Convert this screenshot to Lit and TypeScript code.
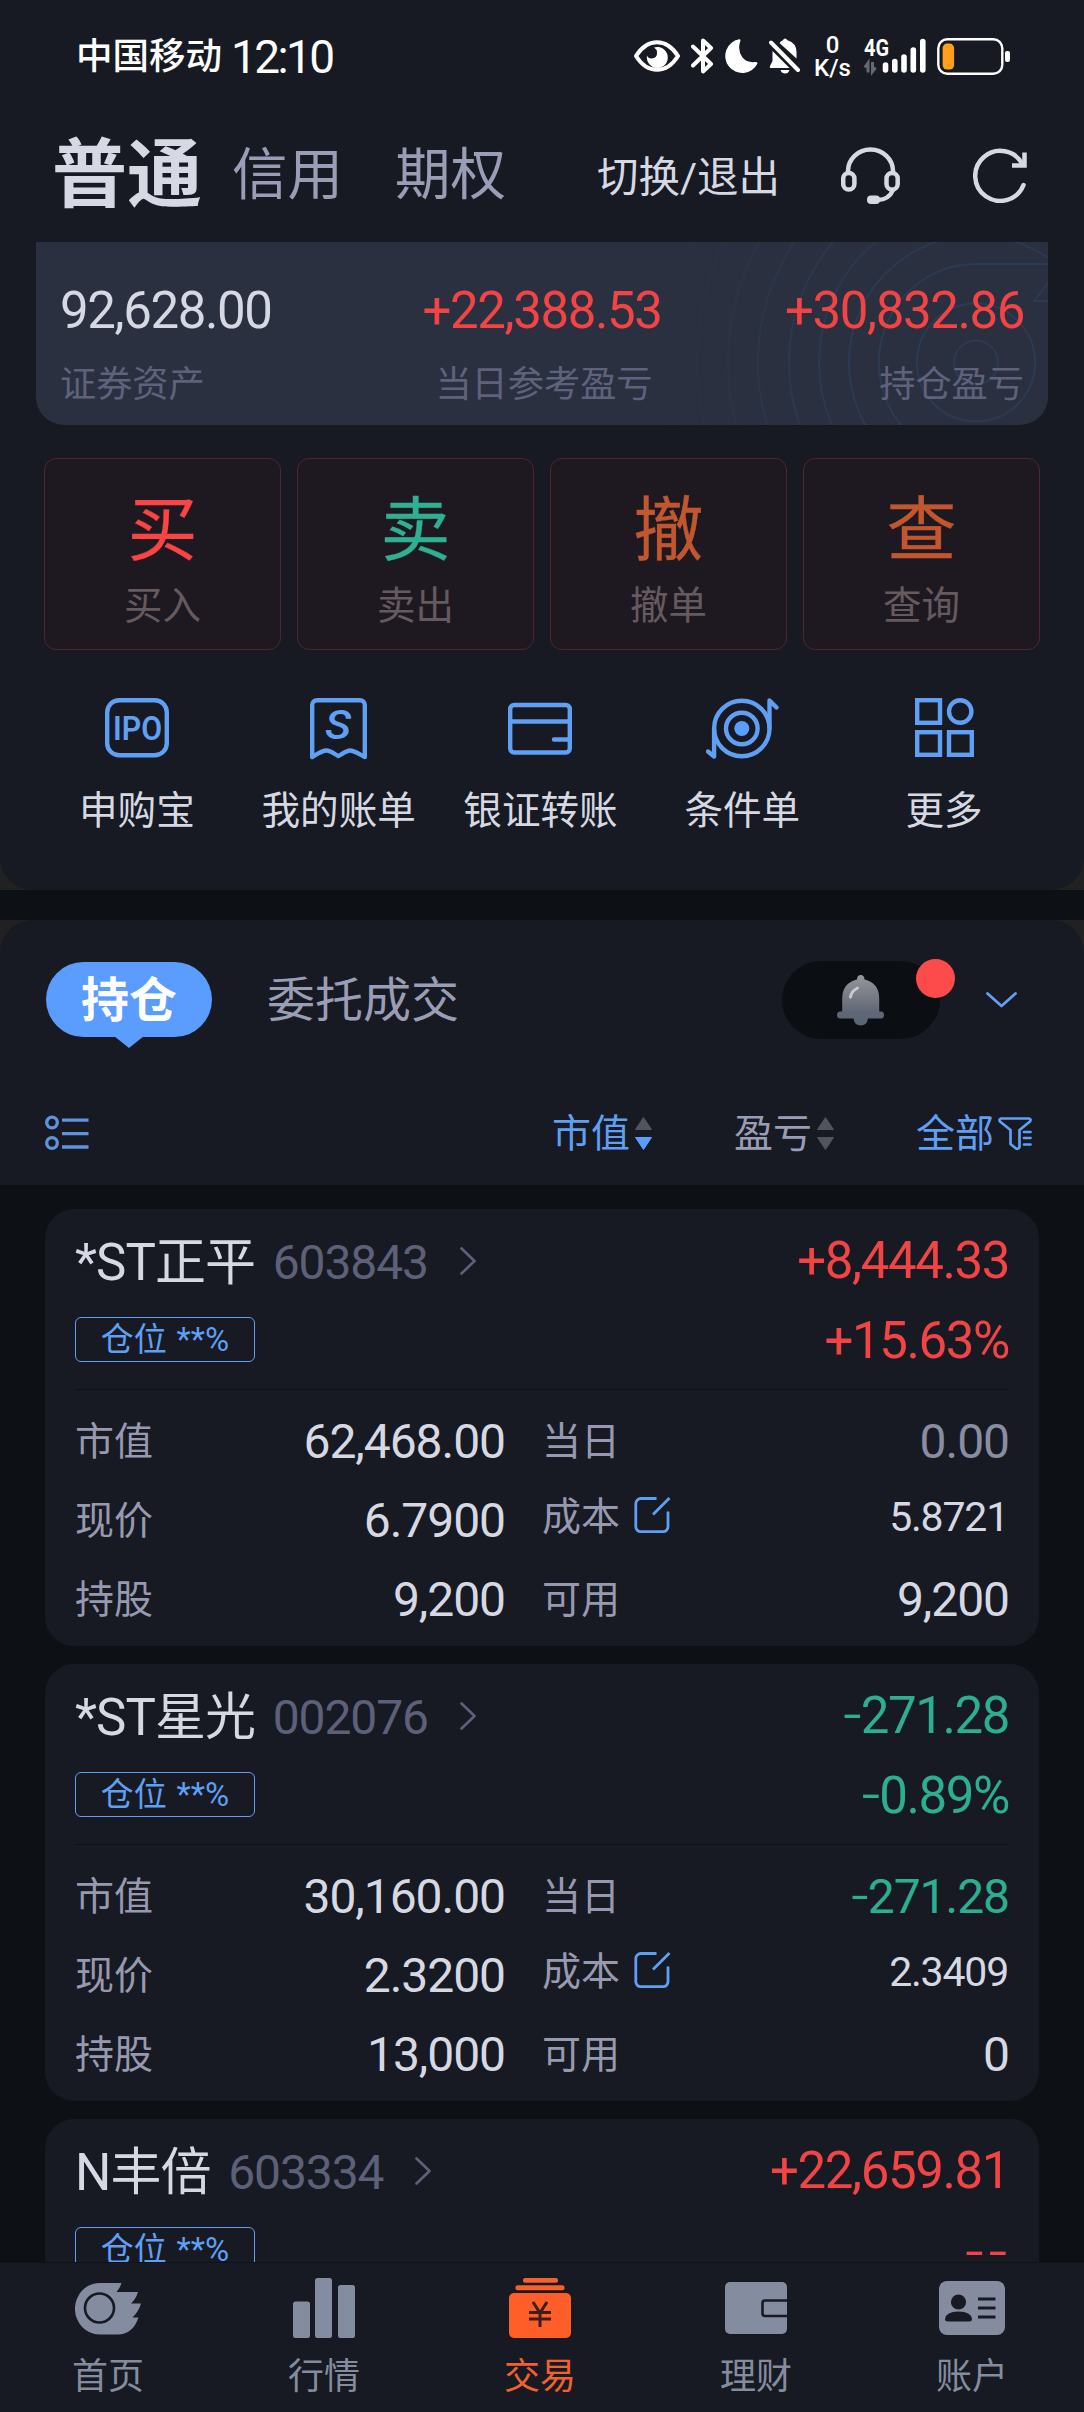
import { LitElement, html, css, svg, nothing } from "lit";
import { customElement, property } from "lit/decorators.js";

type Tone = "up" | "down" | "flat" | "plain";

interface Holding {
  name: string;
  code: string;
  profit: string;
  rate: string;
  tone: Tone;
  value: string;
  today: string;
  todayTone: Tone;
  price: string;
  cost: string;
  shares: string;
  usable: string;
}

const holdings: Holding[] = [
  { name: "*ST正平", code: "603843", profit: "+8,444.33", rate: "+15.63%", tone: "up", value: "62,468.00", today: "0.00", todayTone: "flat", price: "6.7900", cost: "5.8721", shares: "9,200", usable: "9,200" },
  { name: "*ST星光", code: "002076", profit: "-271.28", rate: "-0.89%", tone: "down", value: "30,160.00", today: "-271.28", todayTone: "down", price: "2.3200", cost: "2.3409", shares: "13,000", usable: "0" },
  { name: "N丰倍", code: "603334", profit: "+22,659.81", rate: "--", tone: "up", value: "", today: "", todayTone: "plain", price: "", cost: "", shares: "", usable: "" },
];

const eyeIcon = html`<svg width="46" height="32" viewBox="0 0 46 32"><path d="M2 16C7 8 14 2.200 23 2.200S39 8 44 16C39 24 32 29.800 23 29.800S7 24 2 16Z" fill="none" stroke="#fff" stroke-width="4" stroke-linejoin="round"/><path d="M20 7.500A10.500 10.500 0 1 1 13 15.500Q14 18.500 17.500 18.500Q23.500 18 23 12.500Q22.800 9 20 7.500Z" fill="#fff"/></svg>`;
const bluetoothIcon = html`<svg width="23" height="36" viewBox="0 0 23 36"><path d="M2 8.500L20 26L12 33.500V2.500L20 10L2 27.500" fill="none" stroke="#fff" stroke-width="4" stroke-linejoin="round" stroke-linecap="round"/></svg>`;
const moonIcon = html`<svg width="33" height="34" viewBox="0 0 33 34"><path d="M15.500 1.500Q15.500 .2 14 .3A17 17 0 1 0 32.500 24.500Q32.500 22.500 30.500 23Q22 24 17.500 18.500Q12 11 15.500 1.500Z" fill="#fff"/></svg>`;
const muteIcon = html`<svg width="31" height="36" viewBox="0 0 31 36"><path d="M3.500 13L20.500 30H2.500Q0 30 1 28L3.500 23ZM10.500 5Q12 2.800 14 2.200Q14.500 .5 16 .5T18.500 2.200Q27.500 5 27.500 14V20.500Z" fill="#fff"/><path d="M2 4.500L29 32" stroke="#fff" stroke-width="4" stroke-linecap="round"/><path d="M11.500 32H20.500Q19.500 35.500 16 35.500T11.500 32Z" fill="#fff"/></svg>`;
const signalIcon = html`<svg class="signal" width="62" height="36" viewBox="0 0 62 36"><text class="net" x="0" y="18" textLength="25" lengthAdjust="spacingAndGlyphs">4G</text><path d="M4 34.500V25L.8 29.500M8.500 24V33.500L11.500 29.500" fill="none" stroke="#656872" stroke-width="3"/><path d="M21.500 27V32M30.800 23.500V32M40 19V32M49.300 12V32M58.800 3.500V32" stroke="#fff" stroke-width="5.600" stroke-linecap="round"/></svg>`;
const batteryIcon = html`<svg width="73" height="37" viewBox="0 0 73 37"><rect x="1.300" y="1.300" width="64" height="34.400" rx="9" fill="none" stroke="#fff" stroke-width="2.400"/><rect x="5.600" y="5.600" width="11.500" height="26" rx="4.500" fill="#ff9f1c"/><rect x="68" y="13" width="5" height="11" rx="2" fill="#fff"/></svg>`;
const headsetIcon = html`<svg width="59" height="57" viewBox="0 0 59 57" fill="none" stroke="#d6d9e3" stroke-width="4.500"><path d="M7 25V24A22.500 21.500 0 0 1 52 24V25"/><rect x="2.200" y="26" width="11.200" height="16.500" rx="5.600"/><rect x="45.500" y="26" width="11.200" height="16.500" rx="5.600"/><path d="M52 43Q48 52.500 37 53"/><rect x="26" y="48.500" width="13" height="8.500" rx="4" fill="#d6d9e3" stroke="none"/></svg>`;
const refreshIcon = html`<svg width="54" height="55" viewBox="0 0 54 55" fill="none" stroke="#d6d9e3" stroke-width="4.500"><path d="M49.500 16.500A25 25 0 1 0 50.500 37" stroke-linecap="round"/><path d="M51.500 4.500V17.500H39" /></svg>`;

const ipoIcon = html`<svg width="64" height="62" viewBox="0 0 64 62"><rect x="2.200" y="2.200" width="59.600" height="55" rx="12" fill="none" stroke="#5f9ff4" stroke-width="4.400"/><text class="ipo" x="8" y="42" textLength="49" lengthAdjust="spacingAndGlyphs">IPO</text></svg>`;
const billIcon = html`<svg width="57" height="62" viewBox="0 0 57 62"><path d="M2.200 59V7A4.800 4.800 0 0 1 7 2.200H50A4.800 4.800 0 0 1 54.800 7V59C48 55.500 44 52.500 40 52.500C36 52.500 32 56.500 28.300 58C25 56.500 21 52.500 16.500 52.500C12 52.500 8 55.500 2.200 59Z" fill="none" stroke="#5f9ff4" stroke-width="4.400" stroke-linejoin="round"/><text class="bill" x="15" y="41" textLength="26" lengthAdjust="spacingAndGlyphs">S</text></svg>`;
const cardIcon = html`<svg width="64" height="62" viewBox="0 0 64 62" fill="none" stroke="#5f9ff4" stroke-width="4.400" stroke-linecap="round"><rect x="2.200" y="7" width="59.600" height="47.500" rx="4"/><path d="M3 23.500H61M46 41.500H61"/></svg>`;
const targetIcon = html`<svg width="73" height="62" viewBox="0 0 73 62" fill="none" stroke="#5f9ff4" stroke-width="4.400" stroke-linecap="round" stroke-linejoin="round"><circle cx="35.800" cy="30.500" r="27.700"/><circle cx="35.800" cy="30.500" r="15.800"/><circle cx="35.800" cy="30.500" r="7.500" fill="#5a9cff" stroke="none"/><path d="M8.100 31V58.500L2 53.500M63.500 30V2.500L70.500 9.500"/></svg>`;
const moreIcon = html`<svg width="59" height="62" viewBox="0 0 59 62" fill="none" stroke="#5f9ff4" stroke-width="4.400"><rect x="2.200" y="2.200" width="22.800" height="22.600"/><ellipse cx="45.200" cy="13.500" rx="11.200" ry="11.300"/><rect x="2.200" y="34.200" width="22.800" height="22.600"/><rect x="34" y="34.200" width="22.800" height="22.600"/></svg>`;

const bellIcon = html`<svg width="47" height="51" viewBox="0 0 47 51"><defs><linearGradient id="bell" x1="0" y1="0" x2="0" y2="1"><stop offset="0" stop-color="#96979b"/><stop offset=".75" stop-color="#606675"/><stop offset="1" stop-color="#596571"/></linearGradient></defs><path d="M20 4.500Q20 0 23.700 0T27.500 4.500Q42 8 42.200 23V36.500H44Q47 36.500 47 40T44 43.500H31Q30 50.500 23.700 50.500T16.500 43.500H3.500Q0 43.500 0 40T3.500 36.500H5.200V23Q5.500 8 20 4.500Z" fill="url(#bell)"/><path d="M13.500 22Q14.500 16 20.500 13" fill="none" stroke="#c9cace" stroke-width="3" stroke-linecap="round"/></svg>`;
const chevronDown = html`<svg width="31" height="16" viewBox="0 0 31 16"><path d="M1.500 1.500L15.500 14L29.500 1.500" fill="none" stroke="#5f9ff4" stroke-width="2.800" stroke-linecap="round" stroke-linejoin="round"/></svg>`;
const chevronRight = html`<svg width="17" height="28" viewBox="0 0 17 28"><path d="M1.500 1.500L14.500 14L1.500 26.500" fill="none" stroke="#5d6079" stroke-width="2.600" stroke-linecap="round" stroke-linejoin="round"/></svg>`;
const listIcon = html`<svg width="44" height="38" viewBox="0 0 44 38" fill="none" stroke="#5f93de" stroke-width="3.300"><circle cx="7" cy="7.500" r="5.300"/><circle cx="7" cy="28" r="5.300"/><path d="M17 5.200H43.500M17 18.600H43.500M17 32H43.500"/></svg>`;
const funnelIcon = html`<svg width="34" height="34" viewBox="0 0 34 34" fill="none" stroke="#5f9ff4" stroke-width="2.700" stroke-linecap="round" stroke-linejoin="round"><path d="M3 1.500H31Q33.500 2 32 4.500L21.500 13V30Q20.500 32.500 18 31.500L12.500 27V13L2 4.500Q.5 2.500 3 1.500Z"/><path d="M26 15H32.500M26 21H32.500M26 27.500H32.500"/></svg>`;
const editIcon = html`<svg width="37" height="37" viewBox="0 0 37 37" fill="none" stroke="#5f9ff4" stroke-width="2.800"><path d="M22.500 1.500H7A5 5 0 0 0 1.800 6.500V29.500A5 5 0 0 0 7 34.700H29A5 5 0 0 0 34 29.500V14.500M35.500 1L19 17.500"/></svg>`;

const homeIcon = html`<svg width="66" height="62" viewBox="0 0 66 62"><path d="M46.500 6H24.500A24.500 25.700 0 0 0 24.500 57.500H43Q58 57 63.500 40.500L57.500 40.500Q64 34 66 26.500H56Q61 22 63 15H41.500Q45 11 46.500 6Z" fill="#848c9f"/><circle cx="24.500" cy="31" r="14.500" fill="none" stroke="#171a22" stroke-width="2.600"/></svg>`;
const barsIcon = html`<svg width="62" height="62" viewBox="0 0 62 62" fill="#848c9f"><rect x="0" y="24.500" width="17" height="36.500" rx="2.500"/><rect x="22" y="1" width="17" height="60" rx="2.500"/><rect x="45" y="8" width="17" height="53" rx="2.500"/></svg>`;
const tradeIcon = html`<svg width="62" height="62" viewBox="0 0 62 62"><rect x="14" y="1" width="35" height="4.800" rx="2" fill="#f5602c"/><rect x="6.500" y="8.300" width="49" height="5" rx="2" fill="#f5602c"/><rect x="0" y="16" width="62" height="45" rx="5" fill="#ff5e29"/><path d="M24 25L31 36L38 25M31 36V50M20 35.500H42M20 42H42" fill="none" stroke="#3d1d1a" stroke-width="3"/></svg>`;
const walletIcon = html`<svg width="62" height="62" viewBox="0 0 62 62"><rect x="0" y="5" width="62" height="52" rx="5" fill="#848c9f"/><path d="M62 23.500H40Q37.500 23.500 37.500 26V36.500Q37.500 39 40 39H62" fill="none" stroke="#171a22" stroke-width="2.600"/></svg>`;
const accountIcon = html`<svg width="66" height="62" viewBox="0 0 66 62"><rect x="0" y="4" width="66" height="54" rx="8" fill="#868c9f"/><ellipse cx="19.500" cy="25" rx="7.600" ry="7.600" fill="#171a22"/><path d="M6 42Q7 34.500 19.500 34.500T33 42Q33 44.500 30 44.500H9Q6 44.500 6 42Z" fill="#171a22"/><path d="M39 22H56.500M39 31H56.500M39 40H56.500" stroke="#171a22" stroke-width="3"/></svg>`;

/** Pair of up and down triangles beside a sortable column title. */
@customElement("sort-arrows")
class SortArrows extends LitElement {
  @property({ type: Boolean }) active = false;

  static styles = css`
    :host { display: block; width: 19px; height: 36px; }
    .arrows { display: block; }
  `;

  render() {
    const down = this.active ? "#5a9cff" : "#51535f";
    return html`<svg class="arrows" width="19" height="36" viewBox="0 0 19 36" stroke-linejoin="round"><path d="M9.500 1.500L17.500 13.500H1.500Z" fill="#51535f" stroke="#51535f"/><path d="M1.500 21.500H17.500L9.500 33.500Z" fill=${down} stroke=${down}/></svg>`;
  }
}

/** One position in the holdings list. */
@customElement("holding-card")
class HoldingCard extends LitElement {
  @property({ attribute: false }) item!: Holding;

  static styles = css`
    :host {
      display: block;
      flex: none;
      box-sizing: border-box;
      height: 437px;
      padding: 0 30px;
      border-radius: 29px;
      background: #171a22;
      color: #d6d9e3;
    }
    svg { display: block; }
    .head { display: flex; justify-content: space-between; height: 181px; box-sizing: border-box; border-bottom: 1px solid #0e1116; }
    .left { padding-top: 24px; }
    .title { display: flex; align-items: center; height: 60px; line-height: 60px; }
    .name { font-size: 51px; letter-spacing: -0.9px; }
    .code { margin-left: 17.500px; padding-bottom: 1px; font-size: 48px; letter-spacing: -1.100px; color: #5d6079; }
    .go { margin-left: 32px; padding-bottom: 4px; }
    .badge {
      display: flex;
      align-items: center;
      justify-content: center;
      box-sizing: border-box;
      width: 180px;
      height: 45px;
      margin-top: 24px;
      border: 1px solid #5f9ff4;
      border-radius: 6px;
      font-size: 33px;
      line-height: 45px;
      color: #5f9ff4;
      white-space: pre;
      word-spacing: 1.500px;
    }
    .right { padding-top: 22px; font-size: 51px; line-height: 60px; letter-spacing: -1.4px; text-align: right; }
    .rate { margin-top: 20px; }
    .dash { font-size: 1.300em; font-weight: 300; line-height: 1px; vertical-align: -4px; }
    .dashes .dash { letter-spacing: 4.500px; vertical-align: -6px; }
    .dashes { margin-right: -3px; }
    .up { color: #f24444; }
    .down { color: #2caf90; }
    .flat { color: #8a8da2; }
    .stats { display: grid; grid-template-columns: 430px 467px; column-gap: 37px; padding-top: 12px; }
    .stat { display: flex; align-items: center; justify-content: space-between; height: 79px; line-height: 60px; }
    .key { display: flex; align-items: center; gap: 14px; font-size: 39px; color: #9799b1; }
    .num { font-size: 48px; letter-spacing: -1.05px; }
    .compact { height: 72px; }
    .compact .key svg { margin-top: -3px; }
    .compact .num { font-size: 41px; letter-spacing: -1.2px; padding-right: 1px; }
  `;

  /** Draws each leading hyphen as a longer, thinner dash than the digits' own weight. */
  private figure(text: string) {
    const digits = text.replace(/^-+/, "");
    const dashes = text.slice(0, text.length - digits.length);
    return dashes ? html`<span class="dash">${dashes}</span>${digits}` : text;
  }

  private stat(label: string, value: string, tone: Tone = "plain", compact = false) {
    return html`<div class="stat ${compact ? "compact" : ""}">
      <span class="key">${label}${compact ? editIcon : nothing}</span>
      <span class="num ${tone}">${this.figure(value)}</span>
    </div>`;
  }

  render() {
    const h = this.item;
    return html`
      <div class="head">
        <div class="left">
          <div class="title"><span class="name">${h.name}</span><span class="code">${h.code}</span><span class="go">${chevronRight}</span></div>
          <div class="badge">仓位 **%</div>
        </div>
        <div class="right ${h.tone}">
          <div>${this.figure(h.profit)}</div>
          <div class="rate ${h.rate === "--" ? "dashes" : ""}">${this.figure(h.rate)}</div>
        </div>
      </div>
      ${h.value
        ? html`<div class="stats">
            ${this.stat("市值", h.value)} ${this.stat("当日", h.today, h.todayTone)}
            ${this.stat("现价", h.price)} ${this.stat("成本", h.cost, "plain", true)}
            ${this.stat("持股", h.shares)} ${this.stat("可用", h.usable)}
          </div>`
        : nothing}
    `;
  }
}

@customElement("app-root")
class AppRoot extends LitElement {
  static styles = css`
    :host {
      display: block;
      font-family: Roboto, "Noto Sans CJK SC", sans-serif;
      color: #d6d9e3;
    }
    svg { display: block; flex: none; }
    .screen { display: flex; flex-direction: column; width: 1084px; height: 2412px; overflow: hidden; background: #212122; white-space: nowrap; }

    .account { flex: none; height: 890px; border-radius: 0 0 33px 33px; background: #171a22; }

    .status { display: flex; align-items: center; height: 112px; padding: 0 74px 0 76px; color: #fff; }
    .carrier { font-size: 36.500px; font-weight: 500; line-height: 50px; padding-top: 2px; }
    .clock { margin-left: 9px; font-size: 46px; line-height: 50px; letter-spacing: -2.600px; padding-top: 2px; }
    .tray { display: flex; align-items: center; margin-left: auto; gap: 11px; }
    .speed { display: flex; flex-direction: column; align-items: center; margin: 2px 3px 0 4px; width: 35px; font-size: 24px; font-weight: 500; line-height: 23px; }
    .signal { overflow: visible; }
    .net { font-size: 23px; font-weight: 700; fill: #fff; }

    .modes { display: flex; align-items: center; height: 128px; margin-bottom: 2px; padding: 0 57px 0 52px; }
    .mode { font-size: 55.500px; line-height: 80px; color: #9a9db6; }
    .mode + .mode { margin-left: 52px; }
    .mode.current { font-size: 75px; font-weight: 700; color: #d6d9e3; padding-bottom: 3px; }
    .mode.current + .mode { margin-left: 30px; }
    .switch { margin-left: auto; font-size: 41.500px; line-height: 60px; padding-top: 3px; }
    .headset { margin-left: 61px; padding-bottom: 2px; }
    .refresh { margin-left: 73px; padding-bottom: 2px; }

    .assets { position: relative; overflow: hidden; display: grid; grid-template-columns: 1fr auto 1fr; height: 183px; box-sizing: border-box; margin: 0 36px; padding: 39px 24px 0; border-radius: 0 0 28px 28px; background: #2a3040; }
    .rings { position: absolute; inset: 0; }
    .asset { position: relative; text-align: center; }
    .asset:nth-child(2) { text-align: left; }
    .asset:last-child { text-align: right; }
    .amount { font-size: 51px; line-height: 60px; letter-spacing: -1.400px; }
    .caption { margin-top: 24px; font-size: 36.200px; line-height: 40px; color: #5f627c; }
    .asset:nth-child(3) .caption { padding-left: 4px; }
    .up { color: #f24444; }

    .orders { display: grid; grid-template-columns: repeat(4, 1fr); column-gap: 16px; margin: 33px 44px 0; }
    .order { height: 192px; box-sizing: border-box; padding-top: 32px; border: 1px solid #50252e; border-radius: 12px; background: #1e1921; text-align: center; }
    .glyph { font-size: 70px; line-height: 80px; -webkit-text-stroke: 0.3px currentColor; }
    .buy { color: #fb4444; }
    .sell { color: #2fb092; }
    .other { color: #c2572f; }
    .verb { margin-top: 13px; font-size: 38.500px; line-height: 44px; color: #655a5e; }

    .tools { display: grid; grid-template-columns: repeat(5, 201.800px); margin: 48px 0 0 36px; }
    .tool { display: flex; flex-direction: column; align-items: center; font-size: 38.600px; line-height: 50px; gap: 26px; }
    .ipo { font-size: 33px; font-weight: 600; fill: #5f9ff4; }
    .bill { font-size: 40px; font-style: italic; font-weight: 500; fill: #5f9ff4; }

    .divider { flex: none; height: 30px; background: #0d1014; }

    .filters { flex: none; height: 265px; box-sizing: border-box; padding-top: 41px; border-radius: 33px 33px 0 0; background: #171a22; }
    .tabs { display: flex; align-items: center; height: 78px; padding: 0 67px 0 46px; font-size: 48px; }
    .tab { position: relative; width: 166px; height: 75px; margin-bottom: 1px; border-radius: 38px; background: #5a9cff; color: #fff; font-weight: 700; line-height: 77px; text-align: center; }
    .tab::after { content: ""; position: absolute; left: 68px; top: 74px; border: solid transparent; border-width: 12px 15px 0; border-top-color: #5a9cff; }
    .tab-idle { margin-left: 55px; line-height: 77px; padding-top: 1px; color: #9a9db6; }
    .alerts { position: relative; display: flex; align-items: center; justify-content: center; margin-left: auto; width: 158px; height: 78px; box-sizing: border-box; padding-right: 2px; border-radius: 39px; background: #0b0e12; }
    .dot { position: absolute; left: 134px; top: -2px; width: 39px; height: 39px; border-radius: 50%; background: #fd4a4a; }
    .expand { margin-left: 46px; }
    .sorts { display: flex; align-items: center; height: 60px; margin-top: 65px; padding: 0 52px 0 45px; font-size: 39px; line-height: 60px; }
    .sort { display: flex; align-items: center; gap: 4px; color: #9a9db6; }
    .sort.on { color: #5f9ff4; }
    .sort:nth-of-type(1) { margin-left: auto; }
    .sort + .sort { margin-left: 81px; }

    .list { flex: 1; min-height: 0; overflow: hidden; display: flex; flex-direction: column; gap: 18px; padding: 24px 45px 0; background: #0d1014; }

    .nav { flex: none; display: grid; grid-template-columns: repeat(5, 216px); height: 150px; box-sizing: border-box; border-top: 1px solid #0f1218; background: #171a22; font-size: 36px; line-height: 44px; color: #848c9f; }
    .item { display: flex; flex-direction: column; align-items: center; gap: 16px; padding-top: 14px; }
    .item.on { color: #f0622f; }
  `;

  render() {
    return html`
      <div class="screen">
        <section class="account">
          <div class="status">
            <span class="carrier">中国移动</span><span class="clock">12:10</span>
            <div class="tray">
              ${eyeIcon}${bluetoothIcon}${moonIcon}${muteIcon}
              <div class="speed"><span>0</span><span>K/s</span></div>
              ${signalIcon}${batteryIcon}
            </div>
          </div>

          <div class="modes">
            <span class="mode current">普通</span><span class="mode">信用</span><span class="mode">期权</span>
            <span class="switch">切换/退出</span>
            <span class="headset">${headsetIcon}</span>
            <span class="refresh">${refreshIcon}</span>
          </div>

          <div class="assets">
            <svg class="rings" width="1012" height="183" viewBox="0 0 1012 183" fill="none" stroke="#2b3b54" stroke-width="2">
              <circle cx="940" cy="120.500" r="22"/>
              <circle cx="940" cy="120.500" r="59"/>
              <path d="M1012 22H940A97 98.500 0 0 0 865 183"/>
              <path d="M1012 41L998 59H1012"/>
              ${[127, 157, 187, 218, 248, 279, 310].map(
                (r, i) => svg`<circle cx="940" cy="120.500" r=${r} opacity=${0.95 - i * 0.13}/>`
              )}
            </svg>
            <div class="asset"><div class="amount">92,628.00</div><div class="caption">证券资产</div></div>
            <div class="asset"><div class="amount up">+22,388.53</div><div class="caption">当日参考盈亏</div></div>
            <div class="asset"><div class="amount up">+30,832.86</div><div class="caption">持仓盈亏</div></div>
          </div>

          <div class="orders">
            <div class="order"><div class="glyph buy">买</div><div class="verb">买入</div></div>
            <div class="order"><div class="glyph sell">卖</div><div class="verb">卖出</div></div>
            <div class="order"><div class="glyph other">撤</div><div class="verb">撤单</div></div>
            <div class="order"><div class="glyph other">查</div><div class="verb">查询</div></div>
          </div>

          <div class="tools">
            <div class="tool">${ipoIcon}<span>申购宝</span></div>
            <div class="tool">${billIcon}<span>我的账单</span></div>
            <div class="tool">${cardIcon}<span>银证转账</span></div>
            <div class="tool">${targetIcon}<span>条件单</span></div>
            <div class="tool">${moreIcon}<span>更多</span></div>
          </div>
        </section>

        <div class="divider"></div>

        <section class="filters">
          <div class="tabs">
            <span class="tab">持仓</span><span class="tab-idle">委托成交</span>
            <div class="alerts">${bellIcon}<i class="dot"></i></div>
            <span class="expand">${chevronDown}</span>
          </div>
          <div class="sorts">
            ${listIcon}
            <div class="sort on">市值<sort-arrows active></sort-arrows></div>
            <div class="sort">盈亏<sort-arrows></sort-arrows></div>
            <div class="sort on">全部${funnelIcon}</div>
          </div>
        </section>

        <section class="list">
          ${holdings.map((h) => html`<holding-card .item=${h}></holding-card>`)}
        </section>

        <nav class="nav">
          <div class="item">${homeIcon}<span>首页</span></div>
          <div class="item">${barsIcon}<span>行情</span></div>
          <div class="item on">${tradeIcon}<span>交易</span></div>
          <div class="item">${walletIcon}<span>理财</span></div>
          <div class="item">${accountIcon}<span>账户</span></div>
        </nav>
      </div>
    `;
  }
}
